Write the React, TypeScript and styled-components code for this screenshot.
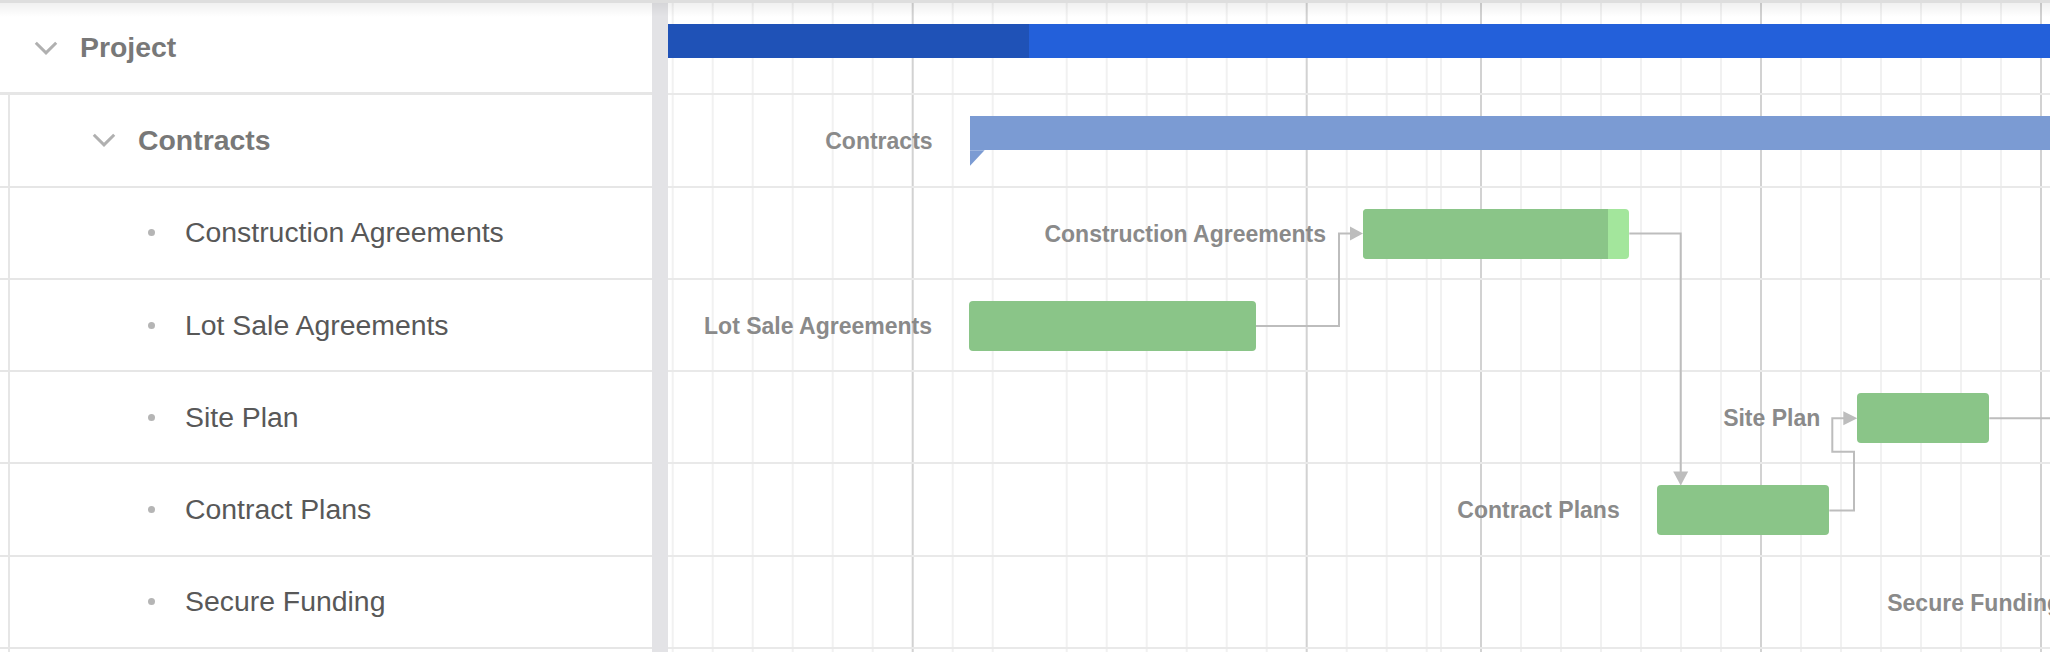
import React from 'react';
import styled, { createGlobalStyle } from 'styled-components';

type Kind = 'project' | 'summary' | 'task';

interface TreeItem {
    label: string;
    level: number;
    group: boolean;
}

interface GanttItem {
    kind: Kind;
    label?: string;
    left: number;
    width: number;
    done?: number;
    tip?: boolean;
}

const ROW_H = 92.3;
const INDENTS = [34, 92, 139];

const treeItems: TreeItem[] = [
    { label: 'Project', level: 0, group: true },
    { label: 'Contracts', level: 1, group: true },
    { label: 'Construction Agreements', level: 2, group: false },
    { label: 'Lot Sale Agreements', level: 2, group: false },
    { label: 'Site Plan', level: 2, group: false },
    { label: 'Contract Plans', level: 2, group: false },
    { label: 'Secure Funding', level: 2, group: false },
];

const ganttItems: GanttItem[] = [
    { kind: 'project', left: 0, width: 1500, done: 361 },
    { kind: 'summary', label: 'Contracts', left: 301.6, width: 1200, tip: true },
    { kind: 'task', label: 'Construction Agreements', left: 695, width: 266.3, done: 244.7 },
    { kind: 'task', label: 'Lot Sale Agreements', left: 301, width: 287 },
    { kind: 'task', label: 'Site Plan', left: 1189.3, width: 132 },
    { kind: 'task', label: 'Contract Plans', left: 988.7, width: 172.6 },
    { kind: 'task', label: 'Secure Funding', left: 1430, width: 140 },
];

// day columns, three runs as they are drawn in the timeline
const gridLines: { x: number; dark: boolean }[] = [
    ...Array.from({ length: 9 }, (_, k) => ({ x: 4.7 + 40 * k, dark: k === 6 })),
    ...Array.from({ length: 10 }, (_, k) => ({ x: 398.7 + 40 * k, dark: k === 6 })),
    ...Array.from({ length: 16 }, (_, k) => ({ x: 773 + 40 * k, dark: k === 1 || k === 8 || k === 15 })),
];

const barMid = (row: number) => ROW_H * row + 46;

const GlobalStyle = createGlobalStyle`
  html, body {
    margin: 0;
    padding: 0;
    background: #ffffff;
    overflow: hidden;
  }
  body {
    font-family: "Liberation Sans", Arial, Helvetica, sans-serif;
  }
`;

const Page = styled.div`
  position: relative;
  display: flex;
  width: 2050px;
  height: 652px;
  box-sizing: border-box;
  border-top: 3px solid #dedede;
  overflow: hidden;
`;

const TopShade = styled.div`
  position: absolute;
  top: 0;
  left: 0;
  right: 0;
  height: 14px;
  background: linear-gradient(rgba(0, 0, 0, 0.06), rgba(0, 0, 0, 0));
  pointer-events: none;
  z-index: 5;
`;

const TreePanel = styled.div`
  width: 652px;
  flex-shrink: 0;
  display: flex;
  flex-direction: column;
`;

const TreeBody = styled.div`
  flex: 1;
  display: flex;
  flex-direction: column;
  background-image: linear-gradient(to right, transparent 8px, #e6e6e6 8px, #e6e6e6 10px, transparent 10px);
`;

const TreeRow = styled.div<{ $indent: number; $head?: boolean }>`
  display: flex;
  align-items: center;
  flex-shrink: 0;
  height: ${ROW_H}px;
  box-sizing: border-box;
  padding-left: ${({ $indent }) => $indent}px;
  border-bottom: ${({ $head }) => ($head ? '3px' : '2px')} solid #e6e6e6;
  background: ${({ $head }) => ($head ? '#ffffff' : 'transparent')};
`;

const IconSlot = styled.span`
  width: 24px;
  height: 24px;
  margin-right: 22px;
  display: flex;
  align-items: center;
  justify-content: center;
  flex-shrink: 0;
`;

const Bullet = styled.span`
  width: 7px;
  height: 7px;
  border-radius: 50%;
  background: #b5b5b5;
`;

const RowText = styled.span<{ $bold: boolean }>`
  font-size: 28.4px;
  font-weight: ${({ $bold }) => ($bold ? 700 : 400)};
  color: ${({ $bold }) => ($bold ? '#787878' : '#585858')};
  white-space: nowrap;
`;

const Splitter = styled.div`
  width: 16px;
  flex-shrink: 0;
  background: #e3e3e6;
`;

const Timeline = styled.div`
  position: relative;
  flex: 1;
  overflow: hidden;
  display: flex;
  flex-direction: column;
`;

const Layer = styled.svg<{ $top?: boolean }>`
  position: absolute;
  top: 0;
  left: 0;
  width: 100%;
  height: 100%;
  pointer-events: none;
  z-index: ${({ $top }) => ($top ? 3 : 0)};
`;

const GanttRow = styled.div`
  position: relative;
  flex-shrink: 0;
  height: ${ROW_H}px;
  box-sizing: border-box;
  border-bottom: 2px solid #e9e9e9;
`;

const barColors: Record<Kind, string> = {
    project: '#2360da',
    summary: '#7b9bd3',
    task: '#8ac588',
};

const Bar = styled.div<{ $kind: Kind; $partial: boolean }>`
  position: absolute;
  top: 21px;
  height: ${({ $kind }) => ($kind === 'task' ? 50 : 34)}px;
  border-radius: ${({ $kind }) => ($kind === 'task' ? '4px' : '0')};
  background: ${({ $kind, $partial }) => ($kind === 'task' && $partial ? '#a3e69c' : barColors[$kind])};
`;

const Done = styled.div<{ $kind: Kind }>`
  position: absolute;
  top: 0;
  bottom: 0;
  left: 0;
  border-radius: ${({ $kind }) => ($kind === 'task' ? '4px 0 0 4px' : '0')};
  background: ${({ $kind }) => ($kind === 'project' ? '#1f52b7' : '#8ac588')};
`;

const SummaryTip = styled.div`
  position: absolute;
  left: 0;
  top: 100%;
  width: 15px;
  height: 16px;
  background: #7b9bd3;
  clip-path: polygon(0 0, 100% 0, 0 100%);
`;

const BarLabel = styled.span`
  position: absolute;
  right: calc(100% + 37px);
  top: 25px;
  transform: translateY(-50%);
  font-size: 23px;
  font-weight: 700;
  color: #8a8a8a;
  white-space: nowrap;
`;

const Chevron: React.FC = () => (
    <svg width="24" height="14" viewBox="0 0 24 14">
        <polyline points="1.8,1.8 12,11.8 22.2,1.8" fill="none" stroke="#b0b0b0" strokeWidth="3" />
    </svg>
);

const Arrow: React.FC<{ d: string; head: string }> = ({ d, head }) => (
    <g>
        <path d={d} fill="none" stroke="#bdbdbd" strokeWidth="2" />
        <polygon points={head} fill="#bdbdbd" />
    </g>
);

const App: React.FC = () => {
    const rowTop = (row: number) => ROW_H * row;

    return (
        <>
            <GlobalStyle />
            <Page>
                <TopShade />

                {/* Tree of tasks */}
                <TreePanel>
                    <TreeRow $indent={INDENTS[0]} $head>
                        <IconSlot>
                            <Chevron />
                        </IconSlot>
                        <RowText $bold>{treeItems[0].label}</RowText>
                    </TreeRow>
                    <TreeBody>
                        {treeItems.slice(1).map((item) => (
                            <TreeRow key={item.label} $indent={INDENTS[item.level]}>
                                <IconSlot>{item.group ? <Chevron /> : <Bullet />}</IconSlot>
                                <RowText $bold={item.group}>{item.label}</RowText>
                            </TreeRow>
                        ))}
                    </TreeBody>
                </TreePanel>

                <Splitter />

                {/* Timeline */}
                <Timeline>
                    <Layer>
                        {gridLines.map((line) => (
                            <rect
                                key={line.x}
                                x={line.x - 1}
                                y={0}
                                width={2}
                                height={660}
                                fill={line.dark ? '#d2d2d2' : '#f1f1f1'}
                            />
                        ))}
                    </Layer>

                    {ganttItems.map((item, i) => (
                        <GanttRow key={i}>
                            <Bar
                                $kind={item.kind}
                                $partial={item.done !== undefined}
                                style={{ left: item.left, width: item.width }}
                            >
                                {item.done !== undefined && <Done $kind={item.kind} style={{ width: item.done }} />}
                                {item.tip && <SummaryTip />}
                                {item.label && <BarLabel>{item.label}</BarLabel>}
                            </Bar>
                        </GanttRow>
                    ))}

                    {/* Dependencies */}
                    <Layer $top>
                        <Arrow
                            d={`M588 ${barMid(3)} H671 V${barMid(2)} H683`}
                            head={`682,${barMid(2) - 7} 695,${barMid(2)} 682,${barMid(2) + 7}`}
                        />
                        <Arrow
                            d={`M961.3 ${barMid(2)} H1012.7 V${rowTop(5) + 8}`}
                            head={`1005.2,${rowTop(5) + 7} 1020.2,${rowTop(5) + 7} 1012.7,${rowTop(5) + 21}`}
                        />
                        <Arrow
                            d={`M1161.3 ${barMid(5)} H1186 V448.7 H1164.3 V${barMid(4)} H1176`}
                            head={`1175.3,${barMid(4) - 7} 1189.3,${barMid(4)} 1175.3,${barMid(4) + 7}`}
                        />
                        <path d={`M1321.3 ${barMid(4)} H1400`} fill="none" stroke="#bdbdbd" strokeWidth="2" />
                    </Layer>
                </Timeline>
            </Page>
        </>
    );
};

export default App;
